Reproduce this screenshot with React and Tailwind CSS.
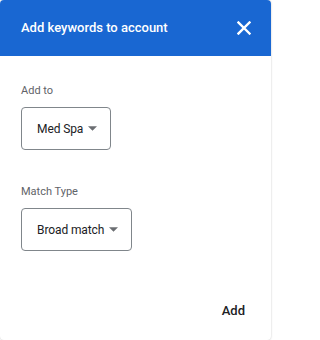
import React from "react";

function Caret() {
  return (
    <svg width="9" height="5" viewBox="0 0 10 5" className="shrink-0">
      <path d="M0 0 L5 5 L10 0 Z" fill="#6b6e72" />
    </svg>
  );
}

function Select({ value }) {
  return (
    <div className="inline-flex h-[43px] items-center gap-[5px] rounded-[4px] border border-[#80868b] pl-[15px] pr-[13px] text-[12px] text-[#202124]">
      <span className="tracking-[-0.1px]">{value}</span>
      <Caret />
    </div>
  );
}

export default function App() {
  return (
    <div
      className="flex h-[340px] w-[271px] flex-col overflow-hidden rounded-[4px] bg-white shadow-[0_0_2px_rgba(0,0,0,0.25)]"
      style={{ fontFamily: "Roboto, 'Liberation Sans', sans-serif" }}
    >
      <div className="flex h-[56px] shrink-0 items-center justify-between bg-[#1967d2] pl-[21px] pr-[20px]">
        <span className="text-[13px] font-medium text-white">Add keywords to account</span>
        <svg width="14" height="14" viewBox="0 0 14 14">
          <path d="M1.5 1.5 L12.5 12.5 M12.5 1.5 L1.5 12.5" stroke="white" strokeWidth="2.4" strokeLinecap="square" />
        </svg>
      </div>
      <div className="flex flex-1 flex-col px-[21px] pt-[27px]">
        <div className="text-[11px] leading-[16px] text-[#5f6368]">Add to</div>
        <div className="mt-[8px]">
          <Select value="Med Spa" />
        </div>
        <div className="mt-[34px] text-[11px] leading-[16px] text-[#5f6368]">Match Type</div>
        <div className="mt-[8px]">
          <Select value="Broad match" />
        </div>
        <div className="mt-[50px] flex justify-end pr-[5px]">
          <span className="text-[13px] font-medium leading-[20px] text-[#202124]">Add</span>
        </div>
      </div>
    </div>
  );
}
